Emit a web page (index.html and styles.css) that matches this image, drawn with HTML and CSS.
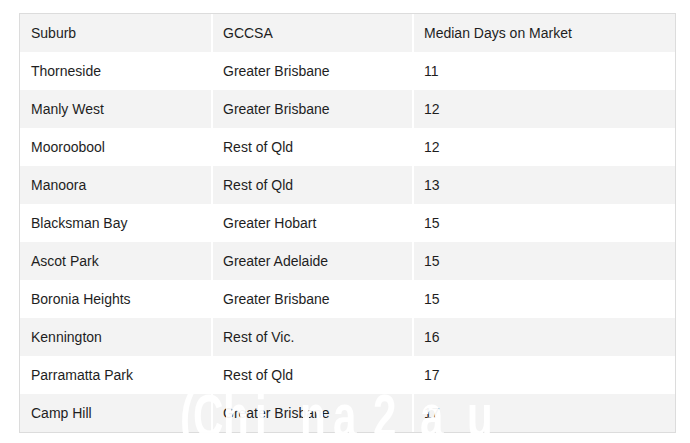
FILE: index.html
```html
<!DOCTYPE html>
<html>
<head>
<meta charset="utf-8">
<link rel="stylesheet" href="styles.css">
</head>
<body>
<div class="wrap">
<table class="data">
<colgroup><col class="c1"><col class="c2"><col class="c3"></colgroup>
<tr><td>Suburb</td><td>GCCSA</td><td>Median Days on Market</td></tr>
<tr><td>Thorneside</td><td>Greater Brisbane</td><td>11</td></tr>
<tr><td>Manly West</td><td>Greater Brisbane</td><td>12</td></tr>
<tr><td>Mooroobool</td><td>Rest of Qld</td><td>12</td></tr>
<tr><td>Manoora</td><td>Rest of Qld</td><td>13</td></tr>
<tr><td>Blacksman Bay</td><td>Greater Hobart</td><td>15</td></tr>
<tr><td>Ascot Park</td><td>Greater Adelaide</td><td>15</td></tr>
<tr><td>Boronia Heights</td><td>Greater Brisbane</td><td>15</td></tr>
<tr><td>Kennington</td><td>Rest of Vic.</td><td>16</td></tr>
<tr><td>Parramatta Park</td><td>Rest of Qld</td><td>17</td></tr>
<tr><td>Camp Hill</td><td>Greater Brisbane</td><td>17</td></tr>
</table>
<div class="mark"><span class="g w13">(</span><span class="g w30">C</span><span class="g w32">h</span><span class="g w45">i</span><span class="g w33">n</span><span class="g w40">a</span><span class="g w47">2</span><span class="g w47">a</span><span class="g w25">u</span></div>
</div>
</body>
</html>
```
FILE: styles.css
```css
html, body {
  margin: 0;
  padding: 0;
  background: #fff;
  overflow: hidden;
}
body {
  width: 690px;
  height: 443px;
}
.wrap {
  position: relative;
  padding: 13px 0 0 19px;
  height: 430px;
}
.data {
  border-collapse: separate;
  border-spacing: 0;
  border: 1px solid #dcdcdc;
  width: 657px;
  table-layout: fixed;
  font-family: "Liberation Sans", Arial, sans-serif;
  font-size: 14px;
  color: #1e1e1e;
}
.c1 { width: 191px; }
.c2 { width: 201px; }
.c3 { width: 263px; }
.data td {
  height: 38px;
  padding: 0 10px;
  vertical-align: middle;
  box-sizing: border-box;
  white-space: nowrap;
}
.data td:first-child {
  padding-left: 11px;
}
.data td + td {
  border-left: 2px solid #fff;
}
.data tr:nth-child(odd) td {
  background: #f3f3f3;
}
.mark {
  position: absolute;
  left: 180px;
  top: 385px;
  display: flex;
  font-family: "Liberation Sans", Arial, sans-serif;
  font-size: 62px;
  font-weight: bold;
  line-height: 1;
  color: rgba(255, 255, 255, 0.95);
  white-space: nowrap;
}
.g {
  display: inline-block;
  transform: scaleX(0.68);
  transform-origin: left top;
}
.w13 { width: 13px; }
.w25 { width: 25px; }
.w30 { width: 30px; }
.w32 { width: 32px; }
.w33 { width: 33px; }
.w40 { width: 40px; }
.w45 { width: 45px; }
.w47 { width: 47px; }
```
